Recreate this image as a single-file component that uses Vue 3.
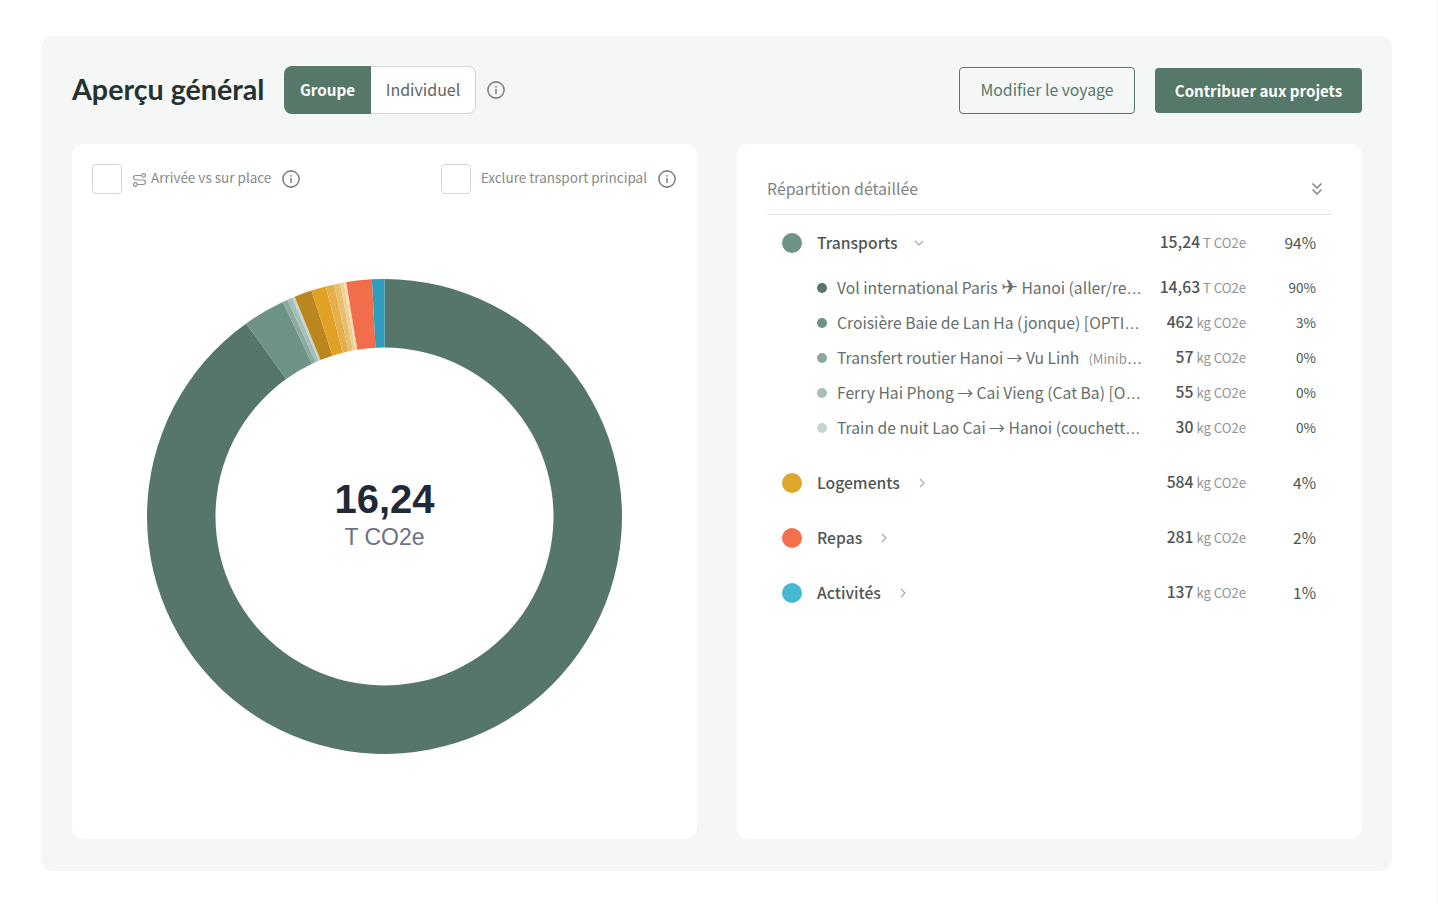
<script setup>
const cx = 237.5, cy = 237.5, R = 237.5, r = 169;
const raw = [
  [14630, '#557668'], [462, '#6c9384'], [57, '#8aa9a0'], [55, '#a5bfb6'], [30, '#c5d6d1'],
  [193, '#b9871e'], [163, '#e0a125'], [93, '#e4b04e'], [67, '#e9bf6f'], [41, '#efd196'], [27, '#f3dfb7'],
  [281, '#f26e4a'], [137, '#2f9dbb']
];
const total = raw.reduce((s, x) => s + x[0], 0);
let acc = 0;
const pt = (rad, a) => `${(cx + rad * Math.sin(a)).toFixed(3)} ${(cy - rad * Math.cos(a)).toFixed(3)}`;
const slices = raw.map(([v, color]) => {
  const a0 = (acc / total) * 2 * Math.PI;
  acc += v;
  const a1 = (acc / total) * 2 * Math.PI;
  const large = a1 - a0 > Math.PI ? 1 : 0;
  return {
    color,
    d: `M${pt(R, a0)}A${R} ${R} 0 ${large} 1 ${pt(R, a1)}L${pt(r, a1)}A${r} ${r} 0 ${large} 0 ${pt(r, a0)}Z`
  };
});
const subs = [
  { c: '#557668', name: 'Vol international Paris ', plane: '✈', rest: ' Hanoi (aller/retour)', v: '14,63', u: 'T CO2e', p: '90%' },
  { c: '#6c9384', name: 'Croisière Baie de Lan Ha (jonque) [OPTION]', v: '462', u: 'kg CO2e', p: '3%' },
  { c: '#8aa9a0', name: 'Transfert routier Hanoi → Vu Linh', note: '(Minibus privé)', v: '57', u: 'kg CO2e', p: '0%' },
  { c: '#a5bfb6', name: 'Ferry Hai Phong → Cai Vieng (Cat Ba) [OPTION]', v: '55', u: 'kg CO2e', p: '0%' },
  { c: '#c5d6d1', name: 'Train de nuit Lao Cai → Hanoi (couchette 4 places)', v: '30', u: 'kg CO2e', p: '0%' }
];
const cats = [
  { c: '#e0a62c', name: 'Logements', v: '584', u: 'kg CO2e', p: '4%' },
  { c: '#f4704c', name: 'Repas', v: '281', u: 'kg CO2e', p: '2%' },
  { c: '#46b8d2', name: 'Activités', v: '137', u: 'kg CO2e', p: '1%' }
];
</script>

<template>
  <div class="page">
    <section class="panel">
      <header class="head">
        <h1 class="title">Aperçu général</h1>
        <div class="toggle">
          <span class="tog on">Groupe</span>
          <span class="tog off">Individuel</span>
        </div>
        <svg class="info top-info" viewBox="0 0 18 18"><circle cx="9" cy="9" r="8.1"/><path d="M9 8.6v3.8M9 5.6v.3"/></svg>
        <div class="spacer"></div>
        <button class="btn ghost"><span>Modifier le voyage</span></button>
        <button class="btn solid"><span>Contribuer aux projets</span></button>
      </header>
      <div class="cards">
        <div class="card left">
          <div class="opts">
            <div class="opt">
              <span class="check"></span>
              <svg class="route" viewBox="0 0 12 13"><circle cx="9.8" cy="2.3" r="1.7"/><circle cx="2.2" cy="10.7" r="1.7"/><path d="M8 2.3H2.6a2.1 2.1 0 0 0 0 4.2h6.8a2.1 2.1 0 0 1 0 4.2H4.1"/></svg>
              <span class="opt-label">Arrivée vs sur place</span>
              <svg class="info" viewBox="0 0 18 18"><circle cx="9" cy="9" r="8.1"/><path d="M9 8.6v3.8M9 5.6v.3"/></svg>
            </div>
            <div class="opt">
              <span class="check"></span>
              <span class="opt-label">Exclure transport principal</span>
              <svg class="info" viewBox="0 0 18 18"><circle cx="9" cy="9" r="8.1"/><path d="M9 8.6v3.8M9 5.6v.3"/></svg>
            </div>
          </div>
          <div class="chart">
            <div class="donut">
              <svg width="476" height="476" viewBox="0 0 476 476">
                <path v-for="(s, i) in slices" :key="i" :d="s.d" :fill="s.color" />
              </svg>
              <div class="center">
                <div class="big">16,24</div>
                <div class="unit">T CO2e</div>
              </div>
            </div>
          </div>
        </div>
        <div class="card right">
          <div class="rhead">
            <span class="rtitle">Répartition détaillée</span>
            <svg class="dbl" viewBox="0 0 12 14"><path d="M1.5 1.5 6 6l4.5-4.5M1.5 7.5 6 12l4.5-4.5"/></svg>
          </div>
          <div class="row cat">
            <span class="dot big-dot" style="background:#6c9384"></span>
            <span class="cat-name">Transports</span>
            <svg class="chev down" viewBox="0 0 10 10"><path d="M1 3l4 4 4-4"/></svg>
            <span class="fill"></span>
            <span class="val"><b>15,24</b> <i>T CO2e</i></span>
            <span class="pct">94%</span>
          </div>
          <div v-for="s in subs" :key="s.name" class="row sub">
            <span class="dot small-dot" :style="{ background: s.c }"></span>
            <span class="sub-name"><span class="sub-text">{{ s.name }}<span v-if="s.plane" class="plane">{{ s.plane }}</span>{{ s.rest }}<small v-if="s.note">{{ s.note }}</small></span></span>
            <span class="val"><b>{{ s.v }}</b> <i>{{ s.u }}</i></span>
            <span class="pct small">{{ s.p }}</span>
          </div>
          <div class="cats">
            <div v-for="c in cats" :key="c.name" class="row cat">
              <span class="dot big-dot" :style="{ background: c.c }"></span>
              <span class="cat-name">{{ c.name }}</span>
              <svg class="chev side" viewBox="0 0 10 10"><path d="M3 1l4 4-4 4"/></svg>
              <span class="fill"></span>
              <span class="val"><b>{{ c.v }}</b> <i>{{ c.u }}</i></span>
              <span class="pct">{{ c.p }}</span>
            </div>
          </div>
        </div>
      </div>
    </section>
  </div>
</template>

<style>
html, body { margin: 0; background: #fff; }
</style>

<style scoped>
.page {
  box-sizing: border-box;
  width: 1438px;
  height: 904px;
  padding: 36px 45px 33px 41px;
  border-right: 1px solid #f3f3f3;
  font-family: "Noto Sans CJK KR", "Noto Sans", sans-serif;
  overflow: hidden;
}
.panel {
  box-sizing: border-box;
  height: 835px;
  background: #f5f7f6;
  border-radius: 12px;
  padding: 30px 30px 32px 31px;
  display: flex;
  flex-direction: column;
}
.head { display: flex; align-items: center; height: 48px; margin-bottom: 30px; }
.title {
  margin: 0 20px 2px 0;
  width: 192px;
  font-family: Lato, sans-serif;
  font-size: 28.65px;
  line-height: 46px;
  font-weight: 700;
  color: #25322f;
  white-space: nowrap;
}
.toggle {
  display: flex;
  height: 48px;
  width: 192px;
}
.tog {
  box-sizing: border-box;
  display: flex;
  align-items: center;
  justify-content: center;
  font-size: 16px;
  padding-bottom: 3px;
}
.tog.on {
  flex: 0 0 87px;
  background: #557869;
  color: #fff;
  font-weight: 600;
  font-size: 15.2px;
  border-radius: 8px 0 0 8px;
}
.tog.off {
  flex: 1;
  background: #fff;
  color: #5d6563;
  border: 1px solid #d4d6d5;
  border-left: none;
  border-radius: 0 8px 8px 0;
}
.info {
  width: 18px;
  height: 18px;
  fill: none;
  stroke: #7f8583;
  stroke-width: 1.6;
  stroke-linecap: round;
  flex: none;
}
.top-info { margin-left: 11px; }
.spacer { flex: 1; }
.btn {
  box-sizing: border-box;
  font-family: inherit;
  font-size: 15.8px;
  border-radius: 4px;
  padding: 0 0 1px;
}
.ghost {
  width: 176px;
  height: 47px;
  background: transparent;
  border: 1px solid #557869;
  color: #557869;
  margin-right: 20px;
}
.solid {
  width: 207px;
  height: 45px;
  background: #557869;
  border: none;
  color: #fff;
  font-weight: 600;
  font-size: 15.1px;
}
.cards { flex: 1; display: flex; gap: 40px; min-height: 0; }
.card {
  box-sizing: border-box;
  flex: 0 0 625px;
  width: 625px;
  min-width: 0;
  background: #fff;
  border-radius: 12px;
  display: flex;
  flex-direction: column;
}
.left { padding: 20px; }
.opts { display: flex; justify-content: space-between; height: 30px; padding-right: 1px; }
.opt { display: flex; align-items: center; }
.check {
  box-sizing: border-box;
  width: 30px;
  height: 30px;
  border: 1px solid #d4d6d5;
  border-radius: 4px;
  margin-right: 10px;
}
.route {
  width: 13px;
  height: 14px;
  margin: 2px 5px 0 1px;
  fill: none;
  stroke: #8a8f8e;
  stroke-width: 1.1;
}
.opt-label { font-size: 13.5px; color: #858b89; margin-right: 11px; margin-bottom: 5px; white-space: nowrap; }
.chart { flex: 1; display: flex; align-items: center; justify-content: center; margin-top: 20px; }
.donut { position: relative; width: 476px; height: 476px; }
.donut svg { display: block; }
.center {
  position: absolute;
  inset: 0;
  display: flex;
  flex-direction: column;
  align-items: center;
  justify-content: center;
  font-family: "Liberation Sans", Arial, sans-serif;
}
.big { font-size: 40px; line-height: 40px; font-weight: 700; color: #1f2937; margin-top: -2px; }
.unit { font-size: 23px; line-height: 32px; color: #6b7280; margin-top: 2px; }
.right { padding: 30px; }
.rhead {
  display: flex;
  align-items: center;
  justify-content: space-between;
  box-sizing: border-box;
  height: 41px;
  padding: 0 9px 11px 0;
  border-bottom: 1px solid #e3e5e4;
  font-size: 15.9px;
  color: #7d8482;
}
.dbl { width: 12px; height: 14px; fill: none; stroke: #7f8583; stroke-width: 1.5; }
.row { display: flex; align-items: center; padding: 0 16px 0 15px; }
.cat { height: 55px; }
.sub { height: 35px; }
.cats { margin-top: 10px; }
.dot { border-radius: 50%; flex: none; }
.big-dot { width: 20px; height: 20px; margin-right: 15px; }
.small-dot { width: 10px; height: 10px; margin-left: 35px; margin-right: 10px; }
.cat-name { font-size: 15.7px; font-weight: 500; color: #4f5654; white-space: nowrap; }
.chev { width: 10px; height: 10px; margin-left: 16px; fill: none; stroke: #a3a8a6; stroke-width: 1.1; }
.chev.side { margin-left: 17px; }
.fill { flex: 1; }
.sub-name {
  flex: 1;
  min-width: 0;
  font-family: "Liberation Sans", sans-serif;
  font-size: 15.7px;
  color: #666e6b;
  white-space: nowrap;
  overflow: hidden;
  text-overflow: ellipsis;
  line-height: 24px;
  margin-top: 2px;
}
.sub-text { font-family: "Noto Sans CJK KR", "Noto Sans", sans-serif; }
.plane { font-size: 20px; line-height: 0; font-family: "DejaVu Sans", sans-serif; }
.sub-name small { font-size: 13.1px; color: #8f9594; margin-left: 9px; }
.val { flex: 0 0 100px; text-align: right; white-space: nowrap; font-size: 13.1px; color: #8f9594; margin-bottom: 2px; }
.val b { font-weight: 500; font-size: 15.7px; color: #4f5654; }
.val i { font-style: normal; }
.pct { flex: 0 0 70px; text-align: right; font-size: 15.5px; color: #46584f; margin-bottom: 2px; }
.pct.small { font-size: 13.5px; }
</style>
